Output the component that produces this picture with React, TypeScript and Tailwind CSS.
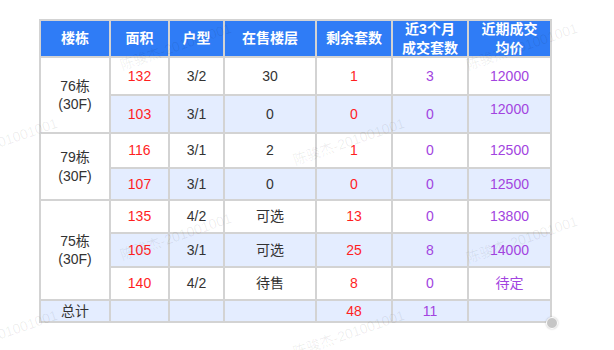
import React from "react";

const RED = "text-[#ff1f1f]";
const PUR = "text-[#a244e0]";

type Cell = { t: string; c?: string; top?: boolean };

const groups: { name: string; rows: Cell[][] }[] = [
  {
    name: "76栋",
    rows: [
      [{ t: "132", c: RED }, { t: "3/2" }, { t: "30" }, { t: "1", c: RED }, { t: "3", c: PUR }, { t: "12000", c: PUR }],
      [{ t: "103", c: RED }, { t: "3/1" }, { t: "0" }, { t: "0", c: RED }, { t: "0", c: PUR }, { t: "12000", c: PUR, top: true }],
    ],
  },
  {
    name: "79栋",
    rows: [
      [{ t: "116", c: RED }, { t: "3/1" }, { t: "2" }, { t: "1", c: RED }, { t: "0", c: PUR }, { t: "12500", c: PUR }],
      [{ t: "107", c: RED }, { t: "3/1" }, { t: "0" }, { t: "0", c: RED }, { t: "0", c: PUR }, { t: "12500", c: PUR }],
    ],
  },
  {
    name: "75栋",
    rows: [
      [{ t: "135", c: RED }, { t: "4/2" }, { t: "可选" }, { t: "13", c: RED }, { t: "0", c: PUR }, { t: "13800", c: PUR }],
      [{ t: "105", c: RED }, { t: "3/1" }, { t: "可选" }, { t: "25", c: RED }, { t: "8", c: PUR }, { t: "14000", c: PUR }],
      [{ t: "140", c: RED }, { t: "4/2" }, { t: "待售" }, { t: "8", c: RED }, { t: "0", c: PUR }, { t: "待定", c: PUR }],
    ],
  },
];

const rowHeights = ["h-[36px]", "h-[36px]", "h-[33px]", "h-[30px]", "h-[31px]", "h-[32px]", "h-[31px]"];
const groupRowSpan = ["row-span-2", "row-span-2", "row-span-3"];

const headers = ["楼栋", "面积", "户型", "在售楼层", "剩余套数", "近3个月\n成交套数", "近期成交\n均价"];

const marks: [number, number][] = [
  [2, 142],
  [176, 47],
  [176, 237],
  [349, 142],
  [349, 334],
  [522, 47],
  [522, 240],
  [2, 334],
];

export default function App() {
  let rowIdx = 0;
  const cells: React.ReactNode[] = [];
  groups.forEach((g, gi) => {
    g.rows.forEach((r, ri) => {
      const h = rowHeights[rowIdx];
      const blue = ri % 2 === 1;
      if (ri === 0) {
        cells.push(
          <div
            key={`g${gi}`}
            className={`${groupRowSpan[gi]} bg-white flex flex-col items-center justify-center leading-[18.5px] text-[#333]`}
          >
            <span>{g.name}</span>
            <span>(30F)</span>
          </div>
        );
      }
      r.forEach((c, ci) => {
        cells.push(
          <div
            key={`r${rowIdx}c${ci}`}
            className={`${h} ${blue ? "bg-[#e4edff]" : "bg-white"} flex justify-center ${
              c.top ? "items-start pt-[3px]" : "items-center"
            } ${c.c ?? "text-[#333]"}`}
          >
            {c.t}
          </div>
        );
      });
      rowIdx++;
    });
  });

  return (
    <div className="w-[614px] h-[350px] bg-white relative overflow-hidden font-['Liberation_Sans','Noto_Sans_CJK_SC',sans-serif] text-[14px]">
      <div className="pl-[39px] pt-[19px]">
        <div className="relative w-[513px]">
          <div className="grid grid-cols-[68px_57px_53px_90px_74px_74px_81px] gap-[2px] p-[2px] bg-[#d3d3d3]">
            {headers.map((h) => (
              <div
                key={h}
                className="h-[35px] bg-[#2f7cf6] text-white font-bold flex items-center justify-center text-center whitespace-pre-line leading-[18.5px]"
              >
                {h}
              </div>
            ))}
            {cells}
            <div className="h-[20px] bg-[#e4edff] flex items-center justify-center text-[#333] leading-none">总计</div>
            <div className="bg-[#e4edff]" />
            <div className="bg-[#e4edff]" />
            <div className="bg-[#e4edff]" />
            <div className={`bg-[#e4edff] flex items-center justify-center leading-none ${RED}`}>48</div>
            <div className={`bg-[#e4edff] flex items-center justify-center leading-none ${PUR}`}>11</div>
            <div className="bg-[#e4edff]" />
          </div>
          <div className="absolute -right-[6px] -bottom-[6px] w-[12px] h-[12px] rounded-full bg-[#c6c6c6] border-[1.5px] border-white shadow-[0_0_2px_rgba(0,0,0,0.25)]" />
        </div>
      </div>
      <div className="absolute inset-0 pointer-events-none">
        {marks.map(([x, y], i) => (
          <div
            key={i}
            className="absolute w-0 h-0"
            style={{ left: x, top: y }}
          >
            <span className="absolute -translate-x-1/2 -translate-y-1/2 -rotate-[19deg] whitespace-nowrap text-[14px] text-black/[0.07]">
              陈骏杰-201001001
            </span>
          </div>
        ))}
      </div>
    </div>
  );
}
